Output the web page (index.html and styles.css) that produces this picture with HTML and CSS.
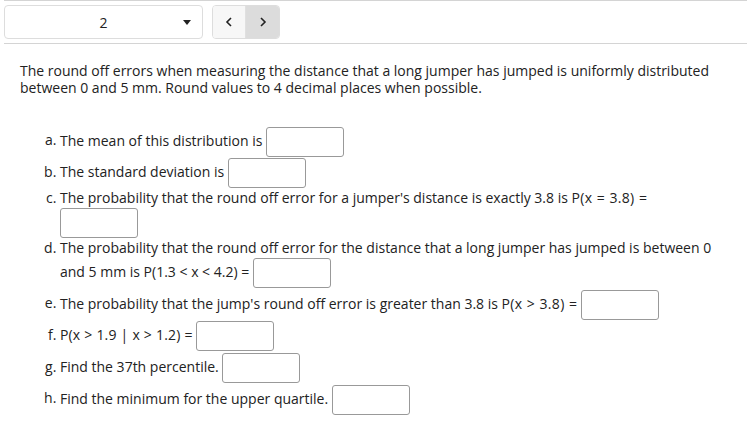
FILE: index.html
```html
<!DOCTYPE html>
<html>
<head>
<meta charset="utf-8">
<link rel="stylesheet" href="styles.css">
</head>
<body>
<div class="toolbar">
  <div class="select"><span class="select-value">2</span><span class="caret"></span></div>
  <div class="pager">
    <button class="pbtn prev" type="button"><svg width="8" height="10" viewBox="0 0 8 10"><path d="M6 1 L2 5 L6 9" fill="none" stroke="#222" stroke-width="1.6"/></svg></button>
    <button class="pbtn next" type="button"><svg width="8" height="10" viewBox="0 0 8 10"><path d="M2 1 L6 5 L2 9" fill="none" stroke="#222" stroke-width="1.6"/></svg></button>
  </div>
</div>
<div class="content">
  <p class="intro">The round off errors when measuring the distance that a long jumper has jumped is uniformly distributed between 0 and 5 mm. Round values to 4 decimal places when possible.</p>
  <ol class="parts">
    <li>The mean of this distribution is <span class="box"></span></li>
    <li>The standard deviation is <span class="box"></span></li>
    <li>The probability that the round off error for a jumper's distance is exactly 3.8 is <span class="math">P(x = 3.8) =</span> <span class="box"></span></li>
    <li>The probability that the round off error for the distance that a long jumper has jumped is between 0 and 5 mm is P(1.3 &lt; x &lt; 4.2) = <span class="box"></span></li>
    <li>The probability that the jump's round off error is greater than 3.8 is <span class="math">P(x &gt; 3.8) =</span> <span class="box"></span></li>
    <li><span class="math-cond">P(x &gt; 1.9 | x &gt; 1.2) =</span> <span class="box"></span></li>
    <li>Find the 37th percentile. <span class="box"></span></li>
    <li>Find the minimum for the upper quartile. <span class="box"></span></li>
  </ol>
</div>
</body>
</html>
```
FILE: styles.css
```css
body {
  margin: 0;
  font-family: "Open Sans", sans-serif;
  font-size: 14px;
  color: #222;
  background: #fff;
}
.toolbar {
  margin-left: 4px;
  border-top: 1px solid #d4d4d4;
  border-bottom: 1px solid #d4d4d4;
  padding: 4px 0 4px 0;
  display: flex;
  gap: 9px;
  height: 34px;
}
.select {
  width: 197px;
  height: 32px;
  border: 1px solid #ddd;
  border-radius: 4px;
  display: flex;
  align-items: center;
  justify-content: center;
  position: relative;
}
.select-value {
  font-size: 14px;
}
.caret {
  position: absolute;
  right: 11px;
  top: 14px;
  width: 0;
  height: 0;
  border-left: 4px solid transparent;
  border-right: 4px solid transparent;
  border-top: 5px solid #222;
}
.pager {
  display: flex;
  border: 1px solid #ddd;
  border-radius: 4px;
  overflow: hidden;
  height: 32px;
}
.pbtn {
  width: 33px;
  border: 0;
  padding: 0;
  margin: 0;
  display: flex;
  align-items: center;
  justify-content: center;
}
.prev { background: #f7f7f7; border-right: 1px solid #e0e0e0; }
.next { background: #dcdcdc; }
.content {
  padding: 0 22px 0 20px;
}
.intro {
  margin: 18px 0 0 0;
  line-height: 17px;
}
.parts {
  list-style: lower-alpha;
  margin: 30px 0 0 0;
  padding-left: 40px;
  line-height: 18px;
}
.parts li {
  margin-top: -0.3px;
}
.math {
  letter-spacing: 0.3px;
  word-spacing: 0.5px;
}
.math-cond {
  letter-spacing: 0.15px;
  word-spacing: 0.2px;
}
.box {
  display: inline-block;
  width: 76px;
  height: 28px;
  border: 1px solid #999;
  border-radius: 3px;
  vertical-align: middle;
  margin: 1px 0;
}
```
